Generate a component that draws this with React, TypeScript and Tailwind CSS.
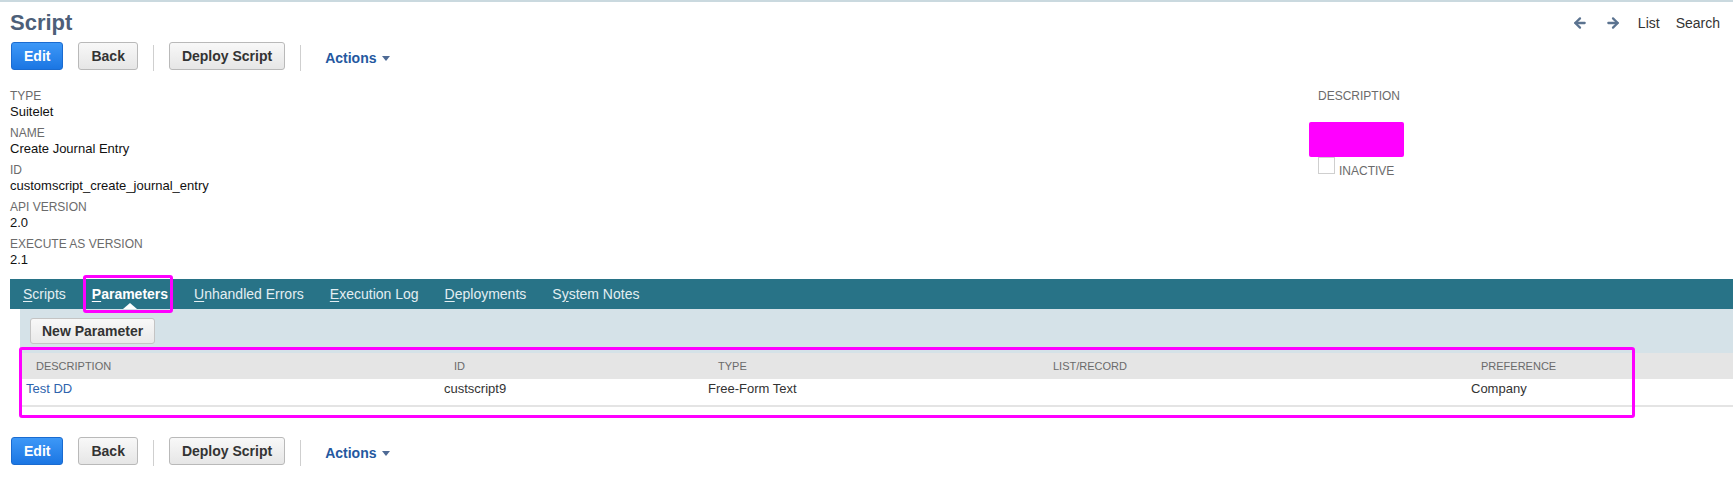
import { ArrowLeft, ArrowRight } from 'lucide-react';

const font = { fontFamily: '"Liberation Sans", Arial, sans-serif' };

function ButtonBar() {
  return (
    <div className="flex items-center h-[28px] pl-[11px]">
      <button className="h-[28px] px-[12px] rounded-[3px] border border-[#1a6bd0] bg-gradient-to-b from-[#3d98f7] to-[#1a76e3] text-white text-[14px] font-bold">
        Edit
      </button>
      <button className="ml-[15px] h-[28px] px-[12px] rounded-[3px] border border-[#b9b9b9] bg-gradient-to-b from-[#f8f8f8] to-[#e6e6e6] text-[#333] text-[14px] font-bold">
        Back
      </button>
      <div className="ml-[15px] w-px h-[26px] mt-[4px] bg-[#cfcfcf]" />
      <button className="ml-[15px] h-[28px] px-[12px] rounded-[3px] border border-[#b9b9b9] bg-gradient-to-b from-[#f8f8f8] to-[#e6e6e6] text-[#333] text-[14px] font-bold">
        Deploy Script
      </button>
      <div className="ml-[15px] w-px h-[26px] mt-[4px] bg-[#cfcfcf]" />
      <button className="ml-[24px] mt-[4px] flex items-center gap-[5px] text-[14px] font-bold text-[#24589f]">
        Actions
        <span className="w-0 h-0 border-l-[4px] border-r-[4px] border-t-[5px] border-l-transparent border-r-transparent border-t-[#4e6a95]" />
      </button>
    </div>
  );
}

const fields = [
  ['TYPE', 'Suitelet'],
  ['NAME', 'Create Journal Entry'],
  ['ID', 'customscript_create_journal_entry'],
  ['API VERSION', '2.0'],
  ['EXECUTE AS VERSION', '2.1'],
];

const tabs: { pre: string; key: string; post: string; active?: boolean }[] = [
  { pre: '', key: 'S', post: 'cripts' },
  { pre: '', key: 'P', post: 'arameters', active: true },
  { pre: '', key: 'U', post: 'nhandled Errors' },
  { pre: '', key: 'E', post: 'xecution Log' },
  { pre: '', key: 'D', post: 'eployments' },
  { pre: 'S', key: 'y', post: 'stem Notes' },
];

const cols = [
  { head: 'DESCRIPTION', w: 'w-[418px]' },
  { head: 'ID', w: 'w-[264px]' },
  { head: 'TYPE', w: 'w-[335px]' },
  { head: 'LIST/RECORD', w: 'w-[428px]' },
  { head: 'PREFERENCE', w: 'flex-1' },
];

export default function App() {
  return (
    <div className="relative w-[1733px] h-[478px] bg-white border-t-2 border-[#cad9df] overflow-hidden" style={font}>
      {/* Header */}
      <div className="flex items-center justify-between pl-[10px] pr-[13px] pt-[8px]">
        <h1 className="text-[22px] leading-[26px] font-bold text-[#4d5f79]">Script</h1>
        <div className="flex items-center text-[14px] text-[#333]">
          <ArrowLeft size={16} strokeWidth={3.4} className="text-[#5b7390]" />
          <ArrowRight size={16} strokeWidth={3.4} className="ml-[17px] text-[#5b7390]" />
          <span className="ml-[17px]">List</span>
          <span className="ml-[16px]">Search</span>
        </div>
      </div>

      <div className="mt-[6px]">
        <ButtonBar />
      </div>

      {/* Fields */}
      <div className="flex mt-[18px]">
        <div className="flex-1 pl-[10px]">
          {fields.map(([label, value]) => (
            <div key={label} className="mb-[5px]">
              <div className="text-[12px] leading-4 text-[#6b6b6b]">{label}</div>
              <div className="text-[13px] leading-4 text-[#111]">{value}</div>
            </div>
          ))}
        </div>
        <div className="w-[415px]">
          <div className="text-[12px] leading-4 text-[#6b6b6b]">DESCRIPTION</div>
          <div className="-ml-[9px] mt-[18px] w-[95px] h-[35px] rounded-[2px] bg-[#ff00ff]" />
          <div className="flex items-start">
            <span className="w-[17px] h-[17px] border border-[#cfcfcf] bg-white" />
            <span className="ml-[4px] mt-[6px] text-[12px] leading-4 text-[#6b6b6b]">INACTIVE</span>
          </div>
        </div>
      </div>

      {/* Tabs */}
      <div className="ml-[10px] mt-[6px] h-[30px] bg-[#287387] flex items-stretch">
        {tabs.map((t) => (
          <div
            key={t.key + t.post}
            className={`relative px-[13px] flex items-center text-[14px] ${t.active ? 'font-bold text-white' : 'text-[#e3eef2]'}`}
          >
            <span>
              {t.pre}
              <u className="underline-offset-2">{t.key}</u>
              {t.post}
            </span>
            {t.active && (
              <span className="absolute bottom-0 left-1/2 -translate-x-1/2 w-0 h-0 border-l-[7px] border-r-[7px] border-b-[6px] border-l-transparent border-r-transparent border-b-white" />
            )}
          </div>
        ))}
      </div>

      {/* Panel */}
      <div className="ml-[20px] bg-[#d5e2e8] pt-[9px] pb-[9px] pl-[10px]">
        <button className="h-[26px] px-[11px] rounded-[3px] border border-[#c4c4c4] bg-gradient-to-b from-[#f8f8f8] to-[#e9e9e9] text-[#333] text-[14px] font-bold">
          New Parameter
        </button>
      </div>

      {/* Table */}
      <div className="ml-[20px]">
        <div className="flex h-[26px] items-center bg-[#e5e5e5] text-[11px] text-[#6a6a6a]">
          {cols.map((c) => (
            <div key={c.head} className={`${c.w} pl-[16px]`}>
              {c.head}
            </div>
          ))}
        </div>
        <div className="flex h-[28px] pt-[2px] border-b-2 border-[#e4e4e4] text-[13px] leading-4 text-[#333]">
          <div className="w-[418px] pl-[6px] text-[#2e63ad]">Test DD</div>
          <div className="w-[264px] pl-[6px]">custscript9</div>
          <div className="w-[335px] pl-[6px]">Free-Form Text</div>
          <div className="w-[428px] pl-[6px]" />
          <div className="flex-1 pl-[6px]">Company</div>
        </div>
      </div>

      <div className="mt-[30px]">
        <ButtonBar />
      </div>

      {/* Annotation overlays */}
      <div className="absolute left-[83px] top-[273px] w-[90px] h-[38px] border-[3px] border-[#ff00ff] rounded-[3px]" />
      <div className="absolute left-[19px] top-[345px] w-[1616px] h-[71px] border-[3px] border-[#ff00ff] rounded-[3px]" />
    </div>
  );
}
